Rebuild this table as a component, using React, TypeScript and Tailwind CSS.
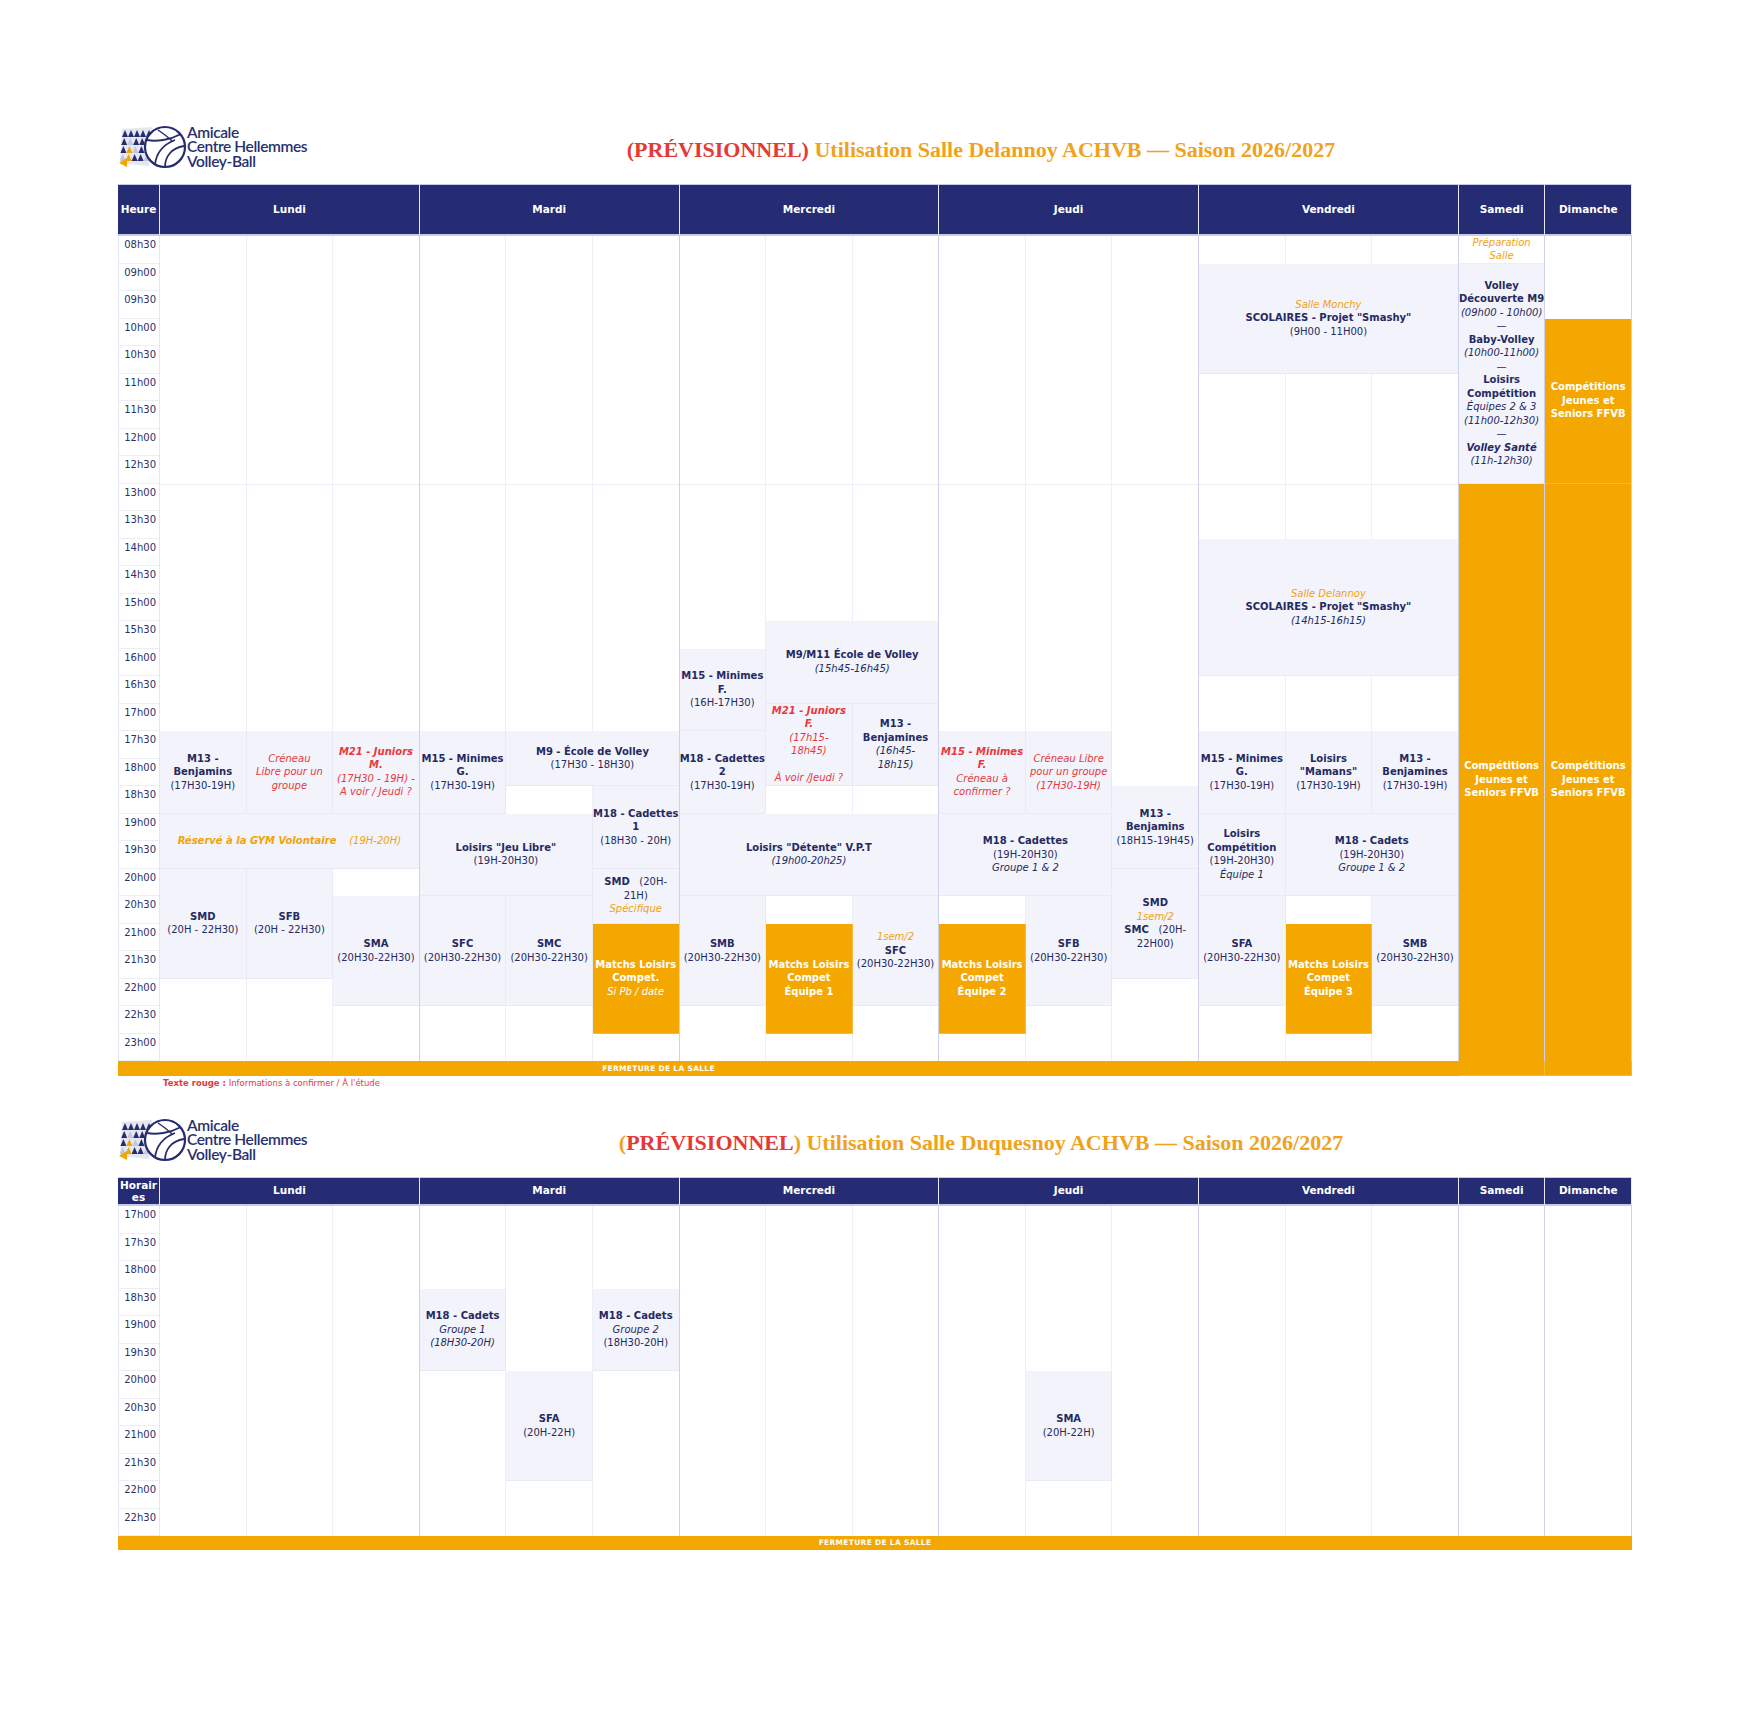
import type { ReactNode } from "react";

type Tone = "light" | "orange" | "white";

function hours(fromMin: number, count: number) {
  return Array.from({ length: count }, (_, i) => {
    const t = fromMin + i * 30;
    const h = Math.floor(t / 60);
    return `${String(h).padStart(2, "0")}h${t % 60 === 0 ? "00" : "30"}`;
  });
}

const H1 = hours(8 * 60 + 30, 30);
const H2 = hours(17 * 60, 12);
const DAY_END = [2, 5, 8, 11, 14, 15, 16];

function Cell({ pos, tone = "light", children }: { pos: string; tone?: Tone; children?: ReactNode }) {
  const toneCls =
    tone === "orange"
      ? "bg-[#f4a700] text-white border-[#f6b93a]"
      : tone === "white"
        ? "bg-white text-[#252a60] border-[#eceef5]"
        : "bg-[#f2f3fb] text-[#252a60] border-[#e8eaf4]";
  return (
    <div className={`${pos} ${toneCls} flex flex-col items-center justify-center border-r border-b text-center text-[10px] leading-[13.5px]`}>
      {children}
    </div>
  );
}

const B = ({ children }: { children: ReactNode }) => <div className="font-bold">{children}</div>;
const I = ({ children }: { children: ReactNode }) => <div className="italic">{children}</div>;
const Red = ({ children }: { children: ReactNode }) => <div className="text-[#e8383d]">{children}</div>;
const Or = ({ children }: { children: ReactNode }) => <div className="italic text-[#f0a20f]">{children}</div>;

function Logo() {
  const wing = ["nnnnn", "ngnnn", "nognn", "gonng"];
  const fill = (c: string) => (c === "n" ? "#262c6e" : c === "o" ? "#f3a400" : "#c3c6db");
  return (
    <div className="flex items-center">
      <svg width="70" height="44" viewBox="0 0 70 44">
        <polygon points="4,4 34,2 31,41 2,38" fill="#e4e6f0" />
        {wing.map((row, r) =>
          row.split("").map((c, k) => {
            const x = 4 + k * 6 - r * 0.8;
            const y0 = 5 + r * 8;
            return <polygon key={`${r}-${k}`} points={`${x},${y0 + 7} ${x + 3},${y0} ${x + 6},${y0 + 7}`} fill={fill(c)} />;
          })
        )}
        <polygon points="1,38 9,33 9,42" fill="#f3a400" />
        <circle cx="47" cy="22" r="20" fill="white" stroke="#262c6e" strokeWidth="2.2" />
        <path d="M29 15 C38 17 52 15 63 9" fill="none" stroke="#262c6e" strokeWidth="1.8" />
        <path d="M37 40 C38 29 44 20 57 15" fill="none" stroke="#262c6e" strokeWidth="1.8" />
        <path d="M47 42 C47 32 53 23 66 21" fill="none" stroke="#262c6e" strokeWidth="1.8" />
        <path d="M40 5 C46 9 50 12 54 16" fill="none" stroke="#262c6e" strokeWidth="1.5" />
      </svg>
      <div className="-ml-px font-['Lato',sans-serif] text-[15.5px] font-semibold leading-[14.5px] tracking-[-0.4px] text-[#28306f]">
        <div>Amicale</div>
        <div>Centre Hellemmes</div>
        <div>Volley-Ball</div>
      </div>
    </div>
  );
}

function Title({ salle, parenOrange }: { salle: string; parenOrange?: boolean }) {
  return (
    <div className="flex-1 pt-[5px] text-center font-['Liberation_Serif',serif] text-[22px] font-bold text-[#f0a21a]">
      {parenOrange ? (
        <>
          (<span className="text-[#e53935]">PRÉVISIONNEL</span>)
        </>
      ) : (
        <span className="text-[#e53935]">(PRÉVISIONNEL)</span>
      )}{" "}
      Utilisation Salle {salle} ACHVB — Saison 2026/2027
    </div>
  );
}

function Header({ first }: { first: ReactNode }) {
  const cls = "bg-[#252c73] text-white font-bold text-[10.5px] flex items-center justify-center text-center border-r border-r-[#e6e8f5] border-t border-t-[#c7cbeb] border-b-2 border-b-[#c7cbeb]";
  return (
    <>
      <div className={`col-start-1 row-start-1 ${cls}`}>{first}</div>
      <div className={`col-start-2 col-span-3 row-start-1 ${cls}`}>Lundi</div>
      <div className={`col-start-5 col-span-3 row-start-1 ${cls}`}>Mardi</div>
      <div className={`col-start-8 col-span-3 row-start-1 ${cls}`}>Mercredi</div>
      <div className={`col-start-11 col-span-3 row-start-1 ${cls}`}>Jeudi</div>
      <div className={`col-start-14 col-span-3 row-start-1 ${cls}`}>Vendredi</div>
      <div className={`col-start-17 row-start-1 ${cls}`}>Samedi</div>
      <div className={`col-start-18 row-start-1 ${cls}`}>Dimanche</div>
    </>
  );
}

function HourCol({ pos, list }: { pos: string; list: string[] }) {
  return (
    <div className={`${pos} flex flex-col border-l border-r border-[#e4e6f0]`}>
      {list.map((h) => (
        <div key={h} className="h-[27.5px] border-b border-[#eceef5] pr-[3px] pt-[3px] text-right text-[10px] leading-[12px] text-[#2b3068]">
          {h}
        </div>
      ))}
    </div>
  );
}

function Lines({ pos, overlay }: { pos: string; overlay?: boolean }) {
  return (
    <div className={`${pos} pointer-events-none grid grid-cols-17`}>
      {Array.from({ length: 17 }, (_, i) =>
        overlay ? (
          <div key={i} className={DAY_END.includes(i) ? "border-r border-[#cfd2ec]" : ""} />
        ) : (
          <div key={i} className="border-r border-[#eef0f6]" />
        )
      )}
    </div>
  );
}

const ORANGE_COMP = <B>Compétitions Jeunes et Seniors FFVB</B>;

function Delannoy() {
  return (
    <div className="grid w-[1514px] grid-cols-[42px_repeat(17,minmax(0,1fr))] grid-rows-[52px_repeat(30,27.5px)_15px]">
      <Header first="Heure" />
      <Lines pos="col-start-2 col-span-17 row-start-2 row-span-30" />
      <div className="col-start-2 col-span-17 row-start-11 border-t border-[#eceef5]" />
      <HourCol pos="col-start-1 row-start-2 row-span-30" list={H1} />

      {/* Lundi */}
      <Cell pos="col-start-2 row-start-20 row-span-3"><B>M13 - Benjamins</B><div>(17H30-19H)</div></Cell>
      <Cell pos="col-start-3 row-start-20 row-span-3">
        <Red><I>Créneau</I><I>Libre pour un</I><I>groupe</I></Red>
      </Cell>
      <Cell pos="col-start-4 row-start-20 row-span-3">
        <Red><div className="font-bold italic">M21 - Juniors M.</div><I>(17H30 - 19H) -</I><I>A voir / Jeudi ?</I></Red>
      </Cell>
      <Cell pos="col-start-2 col-span-3 row-start-23 row-span-2">
        <div className="italic text-[#f0a20f]"><span className="font-bold">Réservé à la GYM Volontaire</span>&nbsp;&nbsp;&nbsp;&nbsp;(19H-20H)</div>
      </Cell>
      <Cell pos="col-start-2 row-start-25 row-span-4"><B>SMD</B><div>(20H - 22H30)</div></Cell>
      <Cell pos="col-start-3 row-start-25 row-span-4"><B>SFB</B><div>(20H - 22H30)</div></Cell>
      <Cell pos="col-start-4 row-start-26 row-span-4"><B>SMA</B><div>(20H30-22H30)</div></Cell>

      {/* Mardi */}
      <Cell pos="col-start-5 row-start-20 row-span-3"><B>M15 - Minimes G.</B><div>(17H30-19H)</div></Cell>
      <Cell pos="col-start-6 col-span-2 row-start-20 row-span-2"><B>M9 - École de Volley</B><div>(17H30 - 18H30)</div></Cell>
      <Cell pos="col-start-7 row-start-22 row-span-3"><B>M18 - Cadettes 1</B><div>(18H30 - 20H)</div></Cell>
      <Cell pos="col-start-7 row-start-25 row-span-2">
        <div><span className="font-bold">SMD</span>&nbsp;&nbsp;&nbsp;(20H-</div>
        <div>21H)</div>
        <Or>Spécifique</Or>
      </Cell>
      <Cell pos="col-start-5 col-span-2 row-start-23 row-span-3"><B>Loisirs "Jeu Libre"</B><div>(19H-20H30)</div></Cell>
      <Cell pos="col-start-5 row-start-26 row-span-4"><B>SFC</B><div>(20H30-22H30)</div></Cell>
      <Cell pos="col-start-6 row-start-26 row-span-4"><B>SMC</B><div>(20H30-22H30)</div></Cell>
      <Cell pos="col-start-7 row-start-27 row-span-4" tone="orange"><B>Matchs Loisirs Compet.</B><I>Si Pb / date</I></Cell>

      {/* Mercredi */}
      <Cell pos="col-start-8 row-start-17 row-span-3"><B>M15 - Minimes F.</B><div>(16H-17H30)</div></Cell>
      <Cell pos="col-start-8 row-start-20 row-span-3"><B>M18 - Cadettes 2</B><div>(17H30-19H)</div></Cell>
      <Cell pos="col-start-9 col-span-2 row-start-16 row-span-3"><B>M9/M11 École de Volley</B><I>(15h45-16h45)</I></Cell>
      <Cell pos="col-start-9 row-start-19 row-span-3">
        <Red>
          <div className="font-bold italic">M21 - Juniors F.</div>
          <I>(17h15-</I>
          <I>18h45)</I>
          <div className="h-[13.5px]" />
          <I>À voir /Jeudi ?</I>
        </Red>
      </Cell>
      <Cell pos="col-start-10 row-start-19 row-span-3"><B>M13 - Benjamines</B><I>(16h45-</I><I>18h15)</I></Cell>
      <Cell pos="col-start-8 col-span-3 row-start-23 row-span-3"><B>Loisirs "Détente" V.P.T</B><I>(19h00-20h25)</I></Cell>
      <Cell pos="col-start-8 row-start-26 row-span-4"><B>SMB</B><div>(20H30-22H30)</div></Cell>
      <Cell pos="col-start-9 row-start-27 row-span-4" tone="orange"><B>Matchs Loisirs Compet</B><B>Équipe 1</B></Cell>
      <Cell pos="col-start-10 row-start-26 row-span-4"><Or>1sem/2</Or><B>SFC</B><div>(20H30-22H30)</div></Cell>

      {/* Jeudi */}
      <Cell pos="col-start-11 row-start-20 row-span-3">
        <Red><div className="font-bold italic">M15 - Minimes F.</div><I>Créneau à</I><I>confirmer ?</I></Red>
      </Cell>
      <Cell pos="col-start-12 row-start-20 row-span-3">
        <Red><I>Créneau Libre</I><I>pour un groupe</I><I>(17H30-19H)</I></Red>
      </Cell>
      <Cell pos="col-start-13 row-start-22 row-span-3"><B>M13 - Benjamins</B><div>(18H15-19H45)</div></Cell>
      <Cell pos="col-start-13 row-start-25 row-span-4">
        <B>SMD</B>
        <Or>1sem/2</Or>
        <div><span className="font-bold">SMC</span>&nbsp;&nbsp;&nbsp;(20H-</div>
        <div>22H00)</div>
      </Cell>
      <Cell pos="col-start-11 col-span-2 row-start-23 row-span-3"><B>M18 - Cadettes</B><div>(19H-20H30)</div><I>Groupe 1 &amp; 2</I></Cell>
      <Cell pos="col-start-11 row-start-27 row-span-4" tone="orange"><B>Matchs Loisirs Compet</B><B>Équipe 2</B></Cell>
      <Cell pos="col-start-12 row-start-26 row-span-4"><B>SFB</B><div>(20H30-22H30)</div></Cell>

      {/* Vendredi */}
      <Cell pos="col-start-14 col-span-3 row-start-3 row-span-4">
        <Or>Salle Monchy</Or><B>SCOLAIRES - Projet "Smashy"</B><div>(9H00 - 11H00)</div>
      </Cell>
      <Cell pos="col-start-14 col-span-3 row-start-13 row-span-5">
        <Or>Salle Delannoy</Or><B>SCOLAIRES - Projet "Smashy"</B><I>(14h15-16h15)</I>
      </Cell>
      <Cell pos="col-start-14 row-start-20 row-span-3"><B>M15 - Minimes G.</B><div>(17H30-19H)</div></Cell>
      <Cell pos="col-start-15 row-start-20 row-span-3"><B>Loisirs "Mamans"</B><div>(17H30-19H)</div></Cell>
      <Cell pos="col-start-16 row-start-20 row-span-3"><B>M13 - Benjamines</B><div>(17H30-19H)</div></Cell>
      <Cell pos="col-start-14 row-start-23 row-span-3"><B>Loisirs Compétition</B><div>(19H-20H30)</div><I>Équipe 1</I></Cell>
      <Cell pos="col-start-14 row-start-26 row-span-4"><B>SFA</B><div>(20H30-22H30)</div></Cell>
      <Cell pos="col-start-15 col-span-2 row-start-23 row-span-3"><B>M18 - Cadets</B><div>(19H-20H30)</div><I>Groupe 1 &amp; 2</I></Cell>
      <Cell pos="col-start-15 row-start-27 row-span-4" tone="orange"><B>Matchs Loisirs Compet</B><B>Équipe 3</B></Cell>
      <Cell pos="col-start-16 row-start-26 row-span-4"><B>SMB</B><div>(20H30-22H30)</div></Cell>

      {/* Samedi / Dimanche */}
      <Cell pos="col-start-17 row-start-2" tone="white"><Or>Préparation</Or><Or>Salle</Or></Cell>
      <Cell pos="col-start-17 row-start-3 row-span-8">
        <B>Volley</B>
        <B>Découverte M9</B>
        <I>(09h00 - 10h00)</I>
        <div>—</div>
        <B>Baby-Volley</B>
        <I>(10h00-11h00)</I>
        <div>—</div>
        <B>Loisirs</B>
        <B>Compétition</B>
        <I>Équipes 2 &amp; 3</I>
        <I>(11h00-12h30)</I>
        <div>—</div>
        <div className="font-bold italic">Volley Santé</div>
        <I>(11h-12h30)</I>
      </Cell>
      <Cell pos="col-start-17 row-start-11 row-span-22" tone="orange">{ORANGE_COMP}</Cell>
      <Cell pos="col-start-18 row-start-5 row-span-6" tone="orange">{ORANGE_COMP}</Cell>
      <Cell pos="col-start-18 row-start-11 row-span-22" tone="orange">{ORANGE_COMP}</Cell>

      <Lines pos="col-start-2 col-span-17 row-start-2 row-span-30" overlay />

      <div className="col-start-1 col-span-13 row-start-32 flex items-center justify-center bg-[#f4a700] text-[7.5px] font-bold tracking-[0.3px] text-white">
        FERMETURE DE LA SALLE
      </div>
      <div className="col-start-14 col-span-3 row-start-32 bg-[#f4a700]" />
    </div>
  );
}

function Duquesnoy() {
  return (
    <div className="grid w-[1514px] grid-cols-[42px_repeat(17,minmax(0,1fr))] grid-rows-[29px_repeat(12,27.5px)_14px]">
      <Header first={<span className="leading-[12px]">Horair<br />es</span>} />
      <Lines pos="col-start-2 col-span-17 row-start-2 row-span-12" />
      <HourCol pos="col-start-1 row-start-2 row-span-12" list={H2} />

      <Cell pos="col-start-5 row-start-5 row-span-3"><B>M18 - Cadets</B><I>Groupe 1</I><I>(18H30-20H)</I></Cell>
      <Cell pos="col-start-7 row-start-5 row-span-3"><B>M18 - Cadets</B><I>Groupe 2</I><div>(18H30-20H)</div></Cell>
      <Cell pos="col-start-6 row-start-8 row-span-4"><B>SFA</B><div>(20H-22H)</div></Cell>
      <Cell pos="col-start-12 row-start-8 row-span-4"><B>SMA</B><div>(20H-22H)</div></Cell>

      <Lines pos="col-start-2 col-span-17 row-start-2 row-span-12" overlay />

      <div className="col-start-1 col-span-18 row-start-14 flex items-center justify-center bg-[#f4a700] text-[7.5px] font-bold tracking-[0.3px] text-white">
        FERMETURE DE LA SALLE
      </div>
    </div>
  );
}

export default function App() {
  return (
    <div className="min-h-[1713px] w-[1753px] bg-white pl-[118px] pt-[125px] font-['DejaVu_Sans',sans-serif]">
      <div className="mb-[16px] flex h-[43px] w-[1514px] items-center">
        <div className="w-[212px]">
          <Logo />
        </div>
        <Title salle="Delannoy" />
      </div>
      <Delannoy />
      <p className="ml-[45px] mt-[1px] text-[8.5px] leading-[12px] text-[#e8383d]">
        <span className="font-bold">Texte rouge :</span> Informations à confirmer / À l'étude
      </p>

      <div className="mb-[16px] mt-[29px] flex h-[43px] w-[1514px] items-center">
        <div className="w-[212px]">
          <Logo />
        </div>
        <Title salle="Duquesnoy" parenOrange />
      </div>
      <Duquesnoy />
    </div>
  );
}
